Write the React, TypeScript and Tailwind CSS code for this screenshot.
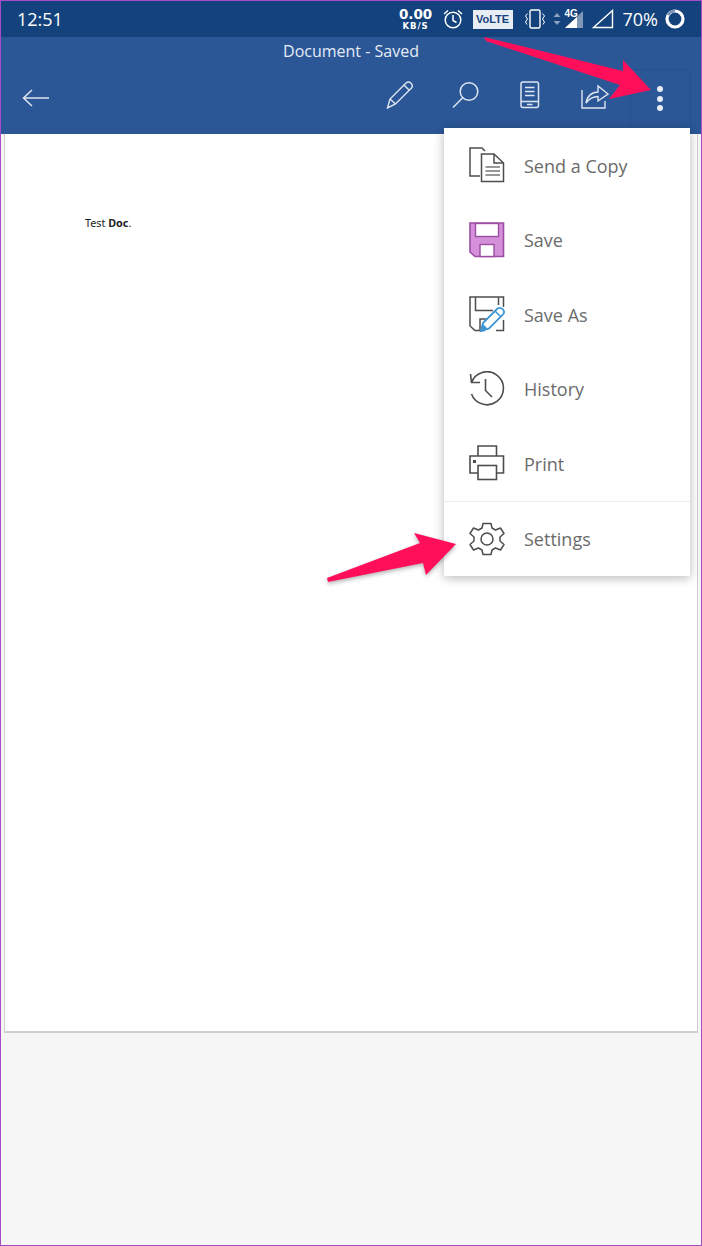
import type { ReactNode } from "react";

const sans = "font-['Open_Sans','Noto_Sans',sans-serif]";

function Svg({ w, h, children, className }: { w: number; h: number; children: ReactNode; className?: string }) {
  return (
    <svg width={w} height={h} viewBox={`0 0 ${w} ${h}`} fill="none" className={className}>
      {children}
    </svg>
  );
}

function StatusBar() {
  return (
    <div className="flex h-[36px] items-center bg-[#14427c] text-white">
      <span className={`ml-[16px] text-[18px] leading-none ${sans}`}>12:51</span>
      <div className="ml-auto flex items-center">
        <div className="flex w-[34px] flex-col items-center font-['DejaVu_Sans',sans-serif] font-bold leading-none">
          <span className="text-[13.5px] leading-[13px]">0.00</span>
          <span className="text-[8.5px] leading-[10px] tracking-[1px]">KB/S</span>
        </div>
        <Svg w={20} h={20} className="ml-[10px]">
          <circle cx="10" cy="11" r="7.8" stroke="white" strokeWidth="1.5" />
          <path d="M10 6V11.5L13.5 13.5M1 5L5 1.5M19 5L15 1.5" stroke="white" strokeWidth="1.5" />
        </Svg>
        <div className="ml-[10px] flex h-[19px] w-[40px] items-center justify-center bg-[#e8edf4] font-['Liberation_Sans',sans-serif] text-[11px] font-bold leading-none text-[#14427c]">
          VoLTE
        </div>
        <Svg w={22} h={20} className="ml-[11px]">
          <rect x="6" y="1" width="10" height="18" rx="1.5" stroke="white" strokeWidth="1.4" />
          <path d="M3.5 4.5L1.5 7L3.5 10L1.5 13L3 15.5M18.5 4.5L20.5 7L18.5 10L20.5 13L19 15.5" stroke="white" strokeWidth="1" />
        </Svg>
        <Svg w={8} h={12} className="ml-[7px]">
          <path d="M4 0L7.5 4H0.5ZM4 12L0.5 8H7.5Z" fill="#8ea3c0" />
        </Svg>
        <div className="relative ml-[2px] h-[20px] w-[22px]">
          <Svg w={20} h={20} className="absolute bottom-0 right-0">
            <path d="M0 19L18 2V19Z" fill="white" opacity="0.45" />
            <path d="M0 19L12 8V19Z" fill="white" />
          </Svg>
          <span className="absolute left-[2px] top-[-3px] font-['Liberation_Sans',sans-serif] text-[10px] font-bold text-white">4G</span>
        </div>
        <Svg w={22} h={20} className="ml-[7px]">
          <path d="M1.5 18.5L20.5 1.5V18.5Z" stroke="white" strokeWidth="1.4" />
        </Svg>
        <span className={`ml-[9px] text-[18px] leading-none ${sans}`}>70%</span>
        <Svg w={20} h={20} className="ml-[7px] mr-[16px]">
          <circle cx="10" cy="10" r="8" stroke="white" strokeWidth="3.2" />
          <path d="M10 2A8 8 0 0 0 3 6" stroke="#7f97bb" strokeWidth="3.2" />
        </Svg>
      </div>
    </div>
  );
}

function Toolbar() {
  return (
    <div className="bg-[#2b5797] text-white">
      <div className={`h-[28px] pt-[3px] text-center text-[16px] leading-[22px] text-[#e6ecf5] ${sans}`}>Document - Saved</div>
      <div className="flex h-[69px] items-start pt-[18px]">
        <Svg w={28} h={18} className="ml-[21px] mt-[6px]">
          <path d="M10 1L1.5 9L10 17M1.5 9H27" stroke="#dfe6f1" strokeWidth="1.5" />
        </Svg>
        <Svg w={28} h={28} className="ml-[336px] mt-[-2px]">
          <path d="M1.5 27L4 18L20 2C21.5 0.8 23.5 0.8 25 2.2C26.5 3.7 26.7 5.6 25.5 7L9.5 23ZM4 18L9.5 23M18 4L23.5 9.5" stroke="#dfe6f1" strokeWidth="1.4" />
        </Svg>
        <Svg w={28} h={28} className="ml-[38px] mt-[-2px]">
          <circle cx="17" cy="10.5" r="8.8" stroke="#dfe6f1" strokeWidth="1.5" />
          <path d="M1 26.5L10.7 16.8" stroke="#dfe6f1" strokeWidth="1.5" />
        </Svg>
        <Svg w={20} h={28} className="ml-[40px] mt-[-2px]">
          <rect x="1" y="1" width="17.5" height="25.5" rx="2" stroke="#dfe6f1" strokeWidth="1.5" />
          <path d="M1 20.5H18.5M5 6.5H14.5M5 10.5H14.5M5 14.5H14.5M7 23.5H12.5" stroke="#dfe6f1" strokeWidth="1.4" />
        </Svg>
        <Svg w={28} h={28} className="ml-[41px] mt-[-2px]">
          <path d="M1 9V27H24V20M5 22C6 15 11 11 17 11V5L27 13L17 20V15.5C12 15.5 8 18 5 22Z" stroke="#dfe6f1" strokeWidth="1.4" />
        </Svg>
        <div className="ml-[21px] mt-[-14px] flex h-[58px] w-[61px] flex-col items-center justify-center gap-[3.5px] border-x border-t border-[#28508c] pr-[2px]">
          <span className="size-[6px] rounded-full bg-[#e8edf4]" />
          <span className="size-[6px] rounded-full bg-[#e8edf4]" />
          <span className="size-[6px] rounded-full bg-[#e8edf4]" />
        </div>
      </div>
    </div>
  );
}

const G = "#4d4d4d";

const menuItems: { label: string; icon: ReactNode }[] = [
  {
    label: "Send a Copy",
    icon: (
      <Svg w={36} h={36}>
        <path d="M11 29H1V1H13L16 4" stroke={G} strokeWidth="1.5" />
        <path d="M12.5 7H25L34.5 16V34.5H12.5Z" fill="white" stroke={G} strokeWidth="1.5" />
        <path d="M25 7V16H34.5" stroke={G} strokeWidth="1.5" />
        <path d="M16.5 20H31M16.5 24H31M16.5 28H31" stroke="#777" strokeWidth="1.3" />
      </Svg>
    ),
  },
  {
    label: "Save",
    icon: (
      <Svg w={36} h={36}>
        <path d="M1 1H34.5V34.5H6L1 30Z" fill="#d490d8" stroke="#9b4ea3" strokeWidth="1.6" />
        <rect x="6.5" y="1.5" width="23" height="13" fill="white" stroke="#9b4ea3" strokeWidth="1.4" />
        <rect x="11" y="22.5" width="14" height="12" fill="white" stroke="#9b4ea3" strokeWidth="1.4" />
      </Svg>
    ),
  },
  {
    label: "Save As",
    icon: (
      <Svg w={36} h={36}>
        <path d="M16 34.5H6L1 30V1H34.5V11M34.5 24V34.5H27" stroke={G} strokeWidth="1.5" />
        <path d="M6.5 1.5V14.5H24M29.5 1.5V9M11 34V23H19" stroke={G} strokeWidth="1.5" />
        <path d="M12 35L14 27L28 13C30 11.5 32 11.5 33.7 13.2C35.4 15 35.3 17 34 18.5L20 32.5Z" fill="white" stroke="#3d97d3" strokeWidth="1.8" />
        <path d="M12 35L14 28L19 33Z" fill="#3d97d3" />
        <path d="M26 15L32 21" stroke="#3d97d3" strokeWidth="1.6" />
      </Svg>
    ),
  },
  {
    label: "History",
    icon: (
      <Svg w={36} h={36}>
        <path d="M1.5 3L2.5 11.5H11" stroke={G} strokeWidth="1.6" />
        <path d="M2.5 11.5A16.5 16.5 0 1 1 2.5 23" stroke={G} strokeWidth="1.6" />
        <path d="M16.5 8V19.5L23 26" stroke={G} strokeWidth="1.6" />
      </Svg>
    ),
  },
  {
    label: "Print",
    icon: (
      <Svg w={36} h={36}>
        <path d="M9 11V1H27.5V11" stroke={G} strokeWidth="1.6" />
        <path d="M9 28H1V11H34.5V28H27" stroke={G} strokeWidth="1.6" />
        <rect x="9" y="20.5" width="18.5" height="14" stroke={G} strokeWidth="1.6" />
        <rect x="4" y="15" width="3" height="3" fill={G} />
      </Svg>
    ),
  },
];

function MenuRow({ label, icon }: { label: string; icon: ReactNode }) {
  return (
    <div className="flex h-[74.5px] items-center pl-[25px]">
      {icon}
      <span className={`ml-[19px] mt-[2px] text-[18px] text-[#6b6b6b] ${sans}`}>{label}</span>
    </div>
  );
}

function Menu() {
  return (
    <div className="absolute left-[443px] top-[127px] w-[246px] bg-white shadow-[0_2px_10px_rgba(0,0,0,0.28)]">
      <div>
        {menuItems.map((item) => (
          <MenuRow key={item.label} {...item} />
        ))}
      </div>
      <div className="border-t border-[#ececec]">
        <MenuRow
          label="Settings"
          icon={
            <Svg w={36} h={36}>
              <path
                d="M14 2.5H22L23 7L26.5 9L31.5 7L35 12.5L31 16V20L35 23.5L31.5 29L26.5 27L23 29L22 33.5H14L13 29L9.5 27L4.5 29L1 23.5L5 20V16L1 12.5L4.5 7L9.5 9L13 7Z"
                stroke={G}
                strokeWidth="1.5"
                strokeLinejoin="round"
              />
              <circle cx="18" cy="18" r="6" stroke={G} strokeWidth="1.5" />
            </Svg>
          }
        />
      </div>
    </div>
  );
}

function Arrows() {
  return (
    <svg width="702" height="1246" viewBox="0 0 702 1246" className="pointer-events-none absolute left-[-1px] top-[-1px]">
      <path d="M484 37L486 41L620 85L609 99L651 90L623 60L623 71Z" fill="#ff0f5a" />
      <path d="M327 578L328 582L423 563L426 575L456 544L414 533L420 543Z" fill="#ff0f5a" style={{ filter: "drop-shadow(0 2px 2px rgba(0,0,0,0.3))" }} />
    </svg>
  );
}

export default function App() {
  return (
    <div className="relative h-[1246px] w-[702px] overflow-hidden border border-[#a64ccb] bg-[#f6f6f6]">
      <StatusBar />
      <Toolbar />
      <div className="mx-[3px] h-[899px] border-x border-b-2 border-[#cfcfcf] bg-white pl-[80px] pt-[82px]">
        <p className="font-['Noto_Sans',sans-serif] text-[10.8px] leading-[14px] text-[#222]">
          Test <b>Doc</b>.
        </p>
      </div>
      <Menu />
      <Arrows />
    </div>
  );
}
